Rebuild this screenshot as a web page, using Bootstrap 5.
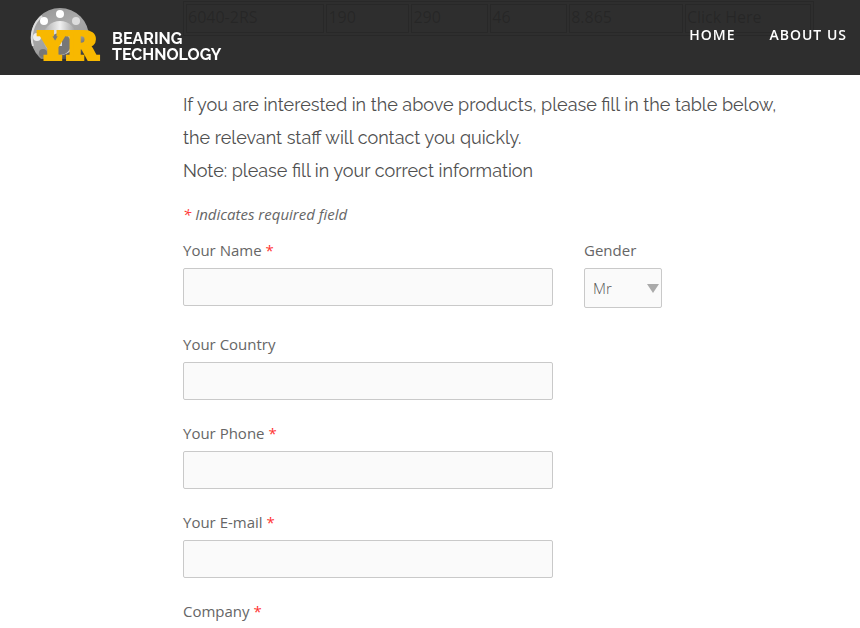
<!DOCTYPE html>
<html lang="en">
<head>
<meta charset="utf-8">
<meta name="viewport" content="width=device-width, initial-scale=1">
<title>YR Bearing Technology</title>
<link href="https://cdn.jsdelivr.net/npm/bootstrap@5.3.0/dist/css/bootstrap.min.css" rel="stylesheet">
<style>
body { font-family: "Open Sans", sans-serif; font-size: 15px; line-height: 24px; color: #666; background: #fff; }
.site-bar { min-height: 75px; padding: 0 13px 5px 30px; background: rgba(37, 37, 37, .96); }
.site-bar .navbar-brand { gap: 6px; color: #fff; }
.brand-words { font-family: Raleway, Lato, sans-serif; font-size: 16px; line-height: 16px; font-weight: 700; padding-top: 23px; }
.site-bar .nav-link { color: #fff; font-size: 14px; font-weight: 600; line-height: 20px; letter-spacing: 1px; }
.site-links { gap: 34px; }
.page-body { max-width: 828px; padding: 1px 14px 24px 183px; }
.spec-table { width: 100%; table-layout: fixed; border: 1px solid #666; border-collapse: separate; border-spacing: 2px; margin-bottom: 52px; color: #444; font-size: 16px; }
.spec-table td { border: 1px solid #666; padding: 0 1px 3px; height: 29px; font-weight: 400; }
.intro { font-family: Raleway, Lato, sans-serif; font-weight: 400; font-size: 18px; line-height: 33px; color: #505050; margin-bottom: 15px; }
.req { color: #f33; }
.field-name { display: block; margin-bottom: 6px; }
.field { width: 370px; max-width: 100%; margin-bottom: 21px; }
.field .form-control, .gender .form-select { border: 1px solid #c9c9c9; border-radius: 2px; background-color: #fafafa; }
.field .form-control { height: 38px; }
.name-row { column-gap: 31px; margin-bottom: 24px; }
.name-row .field { margin-bottom: 0; }
.gender { width: 78px; }
.gender .form-select { height: 40px; padding: 0 16px 0 8px; font-size: 15px; font-weight: 300; color: #555; background-position: right 2px center; background-size: 12px 9px; background-image: url("data:image/svg+xml,%3Csvg xmlns='http://www.w3.org/2000/svg' viewBox='0 0 12 9'%3E%3Cpath d='M0 0h12L6 9z' fill='%23aaa'/%3E%3C/svg%3E"); }
</style>
</head>
<body>
<header class="navbar navbar-expand fixed-top site-bar">
  <a class="navbar-brand d-flex align-items-center p-0 m-0" href="#">
    <svg width="76" height="58" viewBox="0 0 76 58" role="img" aria-label="YR">
      <defs>
        <linearGradient id="steel" x1=".3" y1="0" x2=".7" y2="1"><stop offset="0" stop-color="#999"/><stop offset=".3" stop-color="#aaa"/><stop offset=".6" stop-color="#a0a0a0"/><stop offset=".9" stop-color="#3a3a3a"/></linearGradient>
        <linearGradient id="hub" x1="0" y1="0" x2="1" y2="0"><stop offset="0" stop-color="#aaa"/><stop offset=".5" stop-color="#f0f0f0"/><stop offset="1" stop-color="#999"/></linearGradient>
        <clipPath id="cut"><path d="M0 0h76v53H0z"/></clipPath>
      </defs>
      <g clip-path="url(#cut)">
        <circle cx="30" cy="31" r="29" fill="url(#steel)"/>
        <path d="M3 40A28 28 0 0 1 12 10" fill="none" stroke="#ddd" stroke-width="2"/>
        <circle cx="30" cy="32" r="17" fill="url(#hub)"/>
        <circle cx="30" cy="38" r="11" fill="#777"/>
        <path d="M28 30h4v10h-4z" fill="#ddd"/>
      </g>
      <g fill="#fff"><circle cx="30" cy="8" r="4"/><circle cx="14" cy="15" r="4"/><circle cx="46" cy="15" r="4" fill="#ddd"/><circle cx="7" cy="31" r="4" fill="#eee"/></g>
      <circle cx="13" cy="47" r="4" fill="#777"/>
      <text x="9" y="53" font-family="DejaVu Serif, serif" font-weight="700" font-size="38" fill="#f8b800" stroke="#f8b800" stroke-width="4">YR</text>
    </svg>
    <span class="brand-words">BEARING<br>TECHNOLOGY</span>
  </a>
  <nav class="ms-auto" aria-label="Main">
    <ul class="navbar-nav site-links">
      <li class="nav-item"><a class="nav-link p-0" href="#">HOME</a></li>
      <li class="nav-item"><a class="nav-link p-0" href="#">ABOUT US</a></li>
    </ul>
  </nav>
</header>
<main class="page-body">
  <table class="spec-table">
    <colgroup><col style="width:22.5%"><col style="width:13.5%"><col style="width:12.5%"><col style="width:12.5%"><col style="width:18.5%"><col></colgroup>
    <tbody><tr><td>6040-2RS</td><td>190</td><td>290</td><td>46</td><td>8.865</td><td>Click Here</td></tr></tbody>
  </table>
  <p class="intro">If you are interested in the above products, please fill in the table below,<br>the relevant staff will contact you quickly.<br>Note: please fill in your correct information</p>
  <form>
    <p class="fst-italic mb-0 pb-2"><span class="req">*</span> Indicates required field</p>
    <div class="d-flex flex-wrap pt-1 name-row">
      <div class="field">
        <label class="field-name" for="name">Your Name <span class="req">*</span></label>
        <input class="form-control" id="name" type="text" required>
      </div>
      <div class="gender">
        <label class="field-name" for="gender">Gender</label>
        <select class="form-select" id="gender"><option>Mr</option><option>Ms</option></select>
      </div>
    </div>
    <div class="field">
      <label class="field-name" for="country">Your Country</label>
      <input class="form-control" id="country" type="text">
    </div>
    <div class="field">
      <label class="field-name" for="phone">Your Phone <span class="req">*</span></label>
      <input class="form-control" id="phone" type="tel" required>
    </div>
    <div class="field">
      <label class="field-name" for="email">Your E-mail <span class="req">*</span></label>
      <input class="form-control" id="email" type="email" required>
    </div>
    <div class="field">
      <label class="field-name" for="company">Company <span class="req">*</span></label>
      <input class="form-control" id="company" type="text" required>
    </div>
  </form>
</main>
<script src="https://cdn.jsdelivr.net/npm/bootstrap@5.3.0/dist/js/bootstrap.bundle.min.js"></script>
</body>
</html>
